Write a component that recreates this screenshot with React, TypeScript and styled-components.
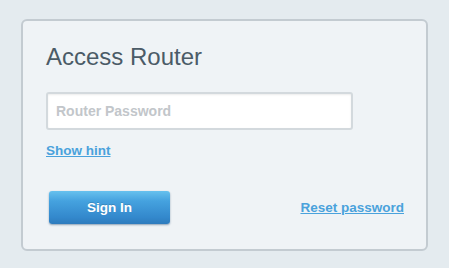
import React from "react";
import styled, { createGlobalStyle } from "styled-components";

const Global = createGlobalStyle`
  html, body { margin: 0; padding: 0; }
  body {
    background: #e4ebef;
    font-family: "Liberation Sans", Arial, sans-serif;
    width: 449px;
    height: 268px;
    overflow: hidden;
  }
`;

const Page = styled.div`
  padding: 19px 0 0 21px;
`;

const Card = styled.div`
  box-sizing: border-box;
  width: 407px;
  height: 232px;
  background: #eff3f6;
  border: 2px solid #c3cbd1;
  border-radius: 6px;
  padding: 22px 22px 0 23px;
  display: flex;
  flex-direction: column;
`;

const Title = styled.h1`
  margin: 0;
  font-size: 24px;
  line-height: 28px;
  font-weight: normal;
  color: #4b5b67;
`;

const Input = styled.input`
  box-sizing: border-box;
  margin-top: 21px;
  width: 307px;
  height: 38px;
  border: 2px solid #d3d9dd;
  border-radius: 3px;
  background: #ffffff;
  box-shadow: inset 0 1px 2px rgba(0, 0, 0, 0.08);
  padding: 0 8px;
  font-family: "Liberation Sans", Arial, sans-serif;
  font-size: 14px;
  font-weight: bold;
  color: #555;
  outline: none;
  &::placeholder {
    color: #c2c6ca;
  }
`;

const Link = styled.a`
  font-size: 13.5px;
  line-height: 16px;
  font-weight: bold;
  color: #4aa2dc;
  text-decoration: underline;
  cursor: pointer;
`;

const HintRow = styled.div`
  margin-top: 13px;
  display: flex;
`;

const ActionRow = styled.div`
  margin-top: 32px;
  display: flex;
  align-items: center;
  justify-content: space-between;
`;

const Button = styled.button`
  margin-left: 3px;
  width: 121px;
  height: 33px;
  border: none;
  border-radius: 3px;
  background: linear-gradient(#67c1ee 0%, #45a2df 30%, #3388cc 80%, #2d7bbd 100%);
  box-shadow: 0 1px 2px rgba(20, 60, 100, 0.45);
  color: #ffffff;
  font-family: "Liberation Sans", Arial, sans-serif;
  font-size: 13.5px;
  font-weight: bold;
  text-shadow: 0 -1px 0 rgba(0, 0, 0, 0.15);
  cursor: pointer;
`;

export default function App() {
  return (
    <Page>
      <Global />
      <Card>
        <Title>Access Router</Title>
        <Input type="password" placeholder="Router Password" />
        <HintRow>
          <Link>Show hint</Link>
        </HintRow>
        <ActionRow>
          <Button>Sign In</Button>
          <Link>Reset password</Link>
        </ActionRow>
      </Card>
    </Page>
  );
}
